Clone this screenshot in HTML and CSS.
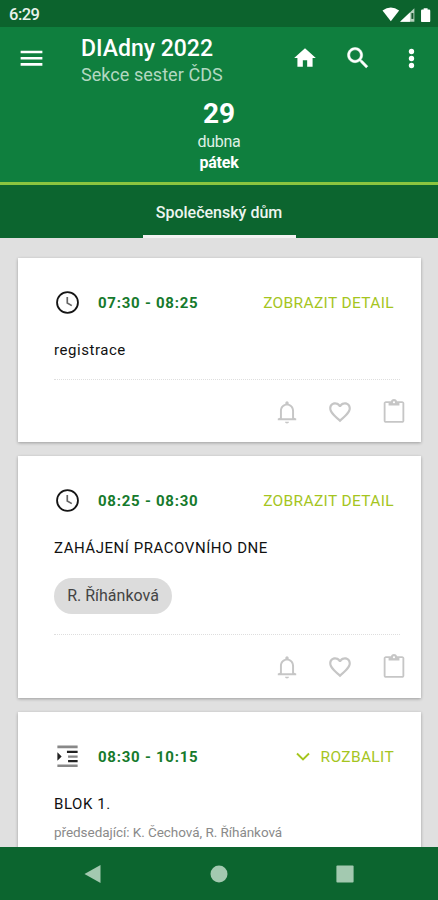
FILE: index.html
```html
<!DOCTYPE html>
<html lang="cs">
<head>
<meta charset="utf-8">
<meta name="viewport" content="width=device-width">
<title>DIAdny 2022</title>
<link rel="stylesheet" href="styles.css">
</head>
<body>
<svg width="0" height="0" class="defs">
  <symbol id="clock" viewBox="0 0 24 24"><circle cx="12" cy="12" r="9.300" fill="none" stroke="currentColor" stroke-width="1.600"/><path d="M11.800 7v5.400l4 2.400" fill="none" stroke="#666" stroke-width="1.500"/></symbol>
  <symbol id="bell" viewBox="0 0 24 24"><path fill="currentColor" fill-rule="evenodd" d="M12 22.500c1 0 1.800-.6 1.800-1.500h-3.600c0 .9.800 1.500 1.800 1.500zM18.500 17.300V11c0-3.200-2-5.900-5-6.600V3.500C13.500 2.700 12.800 2 12 2s-1.500.7-1.500 1.500v.9c-3 .7-5 3.400-5 6.600v6.300L3.500 18.100v1.400h17v-1.400zM16.700 17.700H7.300V11c0-2.700 2-5 4.700-5s4.700 2.300 4.700 5z"/></symbol>
  <symbol id="heart" viewBox="0 0 24 24"><path fill="currentColor" d="M16.500 3c-1.740 0-3.410.81-4.500 2.090C10.910 3.810 9.240 3 7.500 3 4.420 3 2 5.420 2 8.500c0 3.780 3.400 6.860 8.550 11.540L12 21.350l1.450-1.320C18.600 15.360 22 12.280 22 8.500 22 5.420 19.580 3 16.500 3zm-4.400 15.550l-.1.100-.1-.1C7.140 14.240 4 11.390 4 8.500 4 6.500 5.500 5 7.500 5c1.540 0 3.040.99 3.570 2.360h1.870C13.460 5.990 14.960 5 16.500 5c2 0 3.500 1.500 3.500 3.500 0 2.890-3.140 5.740-7.900 10.050z"/></symbol>
  <symbol id="clip" viewBox="0 0 24 24"><path fill="currentColor" fill-rule="evenodd" d="M19.500 2h-4.680C14.400.84 13.300 0 12 0S9.600.84 9.180 2H4.500c-1.100 0-2 .9-2 2v16c0 1.100.9 2 2 2h15c1.100 0 2-.9 2-2V4c0-1.100-.9-2-2-2zM12 2c.55 0 1 .45 1 1s-.45 1-1 1-1-.45-1-1 .45-1 1-1zm7.800 18.300H4.200V3.700H7V6h10V3.700h2.800z"/></symbol>
</svg>
<div class="screen">
  <div class="status">
    <span class="time">6:29</span>
    <svg class="signals" viewBox="0 0 52 16" fill="#fff">
      <path d="M.5 3.300Q9 -2.500 17.500 3.300L9 14.300z"/>
      <path d="M33 1v14H18.500z" fill="#b5d0bd"/><path d="M28.500 5.400V15H18.500z"/><path d="M30 6h2v6h-2z" fill="#14562c"/>
      <path d="M42.500 1h4v1.500H48q1.200 0 1.200 1.200V14q0 1.200-1.200 1.200h-7q-1.200 0-1.200-1.200V3.700q0-1.200 1.200-1.200h1.500z"/>
    </svg>
  </div>
  <header class="header">
    <div class="bar">
      <svg class="icon menu" viewBox="0 0 24 24"><path d="M3 18h18v-2.200H3zm0-5.100h18v-2.200H3zM3 5.500v2.200h18V5.500z"/></svg>
      <div class="titles">
        <h1>DIAdny 2022</h1>
        <p>Sekce sester ČDS</p>
      </div>
      <svg class="icon home" viewBox="0 0 24 24"><path d="M10 20v-6h4v6h5v-8h3L12 3 2 12h3v8z"/></svg>
      <svg class="icon search" viewBox="0 0 24 24"><path stroke="#fff" stroke-width=".4" d="M15.500 14h-.79l-.28-.27C15.410 12.590 16 11.110 16 9.500 16 5.910 13.090 3 9.500 3S3 5.910 3 9.500 5.910 16 9.500 16c1.610 0 3.090-.59 4.230-1.570l.27.28v.79l5 4.990L20.490 19l-4.990-5zm-6 0C7.010 14 5 11.990 5 9.500S7.010 5 9.500 5 14 7.010 14 9.500 11.990 14 9.500 14z"/></svg>
      <svg class="icon more" viewBox="0 0 24 24"><circle cx="12" cy="6.200" r="2.200"/><circle cx="12" cy="12" r="2.200"/><circle cx="12" cy="17.800" r="2.200"/></svg>
    </div>
    <div class="date">
      <div class="day">29</div>
      <div class="month">dubna</div>
      <div class="weekday">pátek</div>
    </div>
  </header>
  <nav class="tabs"><div class="tab"><span>Společenský dům</span></div></nav>
  <main class="list">
    <article class="card first">
      <div class="row"><svg class="lead"><use href="#clock"/></svg><span class="hours">07:30 - 08:25</span><span class="action">ZOBRAZIT DETAIL</span></div>
      <h2>registrace</h2>
      <hr>
      <div class="tools"><svg><use href="#bell"/></svg><svg><use href="#heart"/></svg><svg><use href="#clip"/></svg></div>
    </article>
    <article class="card">
      <div class="row"><svg class="lead"><use href="#clock"/></svg><span class="hours">08:25 - 08:30</span><span class="action">ZOBRAZIT DETAIL</span></div>
      <h2>ZAHÁJENÍ PRACOVNÍHO DNE</h2>
      <div class="chip"><span>R. Říhánková</span></div>
      <hr>
      <div class="tools"><svg><use href="#bell"/></svg><svg><use href="#heart"/></svg><svg><use href="#clip"/></svg></div>
    </article>
    <article class="card last">
      <div class="row">
        <svg class="lead" viewBox="0 0 24 24"><path fill="#888" d="M3 2.300h18v2.300H3zM3 19.100h18v2.300H3zM12.500 11h8.500v2h-8.500z"/><path fill="#222" d="M11.500 6.800h9.500v2h-9.500zM12.500 15.100h8.500v2h-8.500zM3 8.200l3.800 3.800L3 15.800z"/></svg>
        <span class="hours">08:30 - 10:15</span>
        <span class="action"><svg class="chev" viewBox="0 0 14 10"><path d="M1 1.500l6 6 6-6" fill="none" stroke="currentColor" stroke-width="1.900"/></svg><span>ROZBALIT</span></span>
      </div>
      <h2>BLOK 1.</h2>
      <p class="chair">předsedající: K. Čechová, R. Říhánková</p>
    </article>
  </main>
  <footer class="sysnav">
    <svg viewBox="0 0 18 20"><path d="M.5 10L16.500 1v18z"/></svg>
    <svg viewBox="0 0 18 20"><circle cx="9" cy="10" r="8.500"/></svg>
    <svg viewBox="0 0 18 20"><rect x=".4" y="1.400" width="17.200" height="17.200" rx="1"/></svg>
  </footer>
</div>
</body>
</html>
```
FILE: styles.css
```css
* { box-sizing: border-box; margin: 0; padding: 0; }
body { font-family: Roboto, sans-serif; background: #e0e0e0; overflow: hidden; }
.defs { display: none; }
svg { display: block; flex: none; }
.screen { width: 438px; height: 900px; display: flex; flex-direction: column; overflow: hidden; }
.status { flex: none; height: 27px; background: #0c632d; color: #e9f3ec; display: flex; align-items: center; justify-content: space-between; padding: 2px 5.500px 0 9px; }
.time { font-size: 16.500px; font-weight: 500; letter-spacing: -.5px; }
.signals { width: 51px; height: 16px; }
.header { flex: none; height: 158px; background: #0f7f3e; border-bottom: 3px solid #8bc540; color: #fff; }
.bar { height: 70px; display: flex; align-items: center; padding: 0 12px 8px 17px; }
.icon { width: 29px; height: 29px; fill: #fff; }
.titles { flex: 1; padding-left: 35px; padding-top: 7px; white-space: nowrap; }
h1 { font-size: 23px; line-height: 27px; font-weight: 500; }
.titles p { font-size: 18px; line-height: 26px; color: #b3d8c1; letter-spacing: .05px; }
.home { width: 26px; height: 26px; }
.search { margin-left: 26px; width: 28px; height: 28px; }
.more { margin-left: 25px; }
.date { text-align: center; }
.day { font-size: 28px; line-height: 33px; font-weight: 700; }
.month { font-size: 16px; line-height: 24px; color: #dff0e5; letter-spacing: -.3px; }
.weekday { font-size: 16px; line-height: 18px; font-weight: 700; letter-spacing: -.2px; }
.tabs { flex: none; height: 53px; background: #0c652f; display: flex; justify-content: center; }
.tab { width: 153px; border-bottom: 3px solid #f2f2f2; color: #edf5ef; font-size: 16px; font-weight: 500; line-height: 55px; text-align: center; white-space: nowrap; }
.list { flex: 1; min-height: 0; overflow: hidden; padding: 20px 17px 0 18px; display: flex; flex-direction: column; gap: 14px; }
.card { flex: none; height: 242px; background: #fff; box-shadow: 0 1px 3px rgba(0,0,0,.3); padding: 30px 14.500px 0 36px; }
.first { height: 184px; }
.row { height: 29px; display: flex; align-items: center; padding-right: 12.500px; }
.lead { width: 27px; height: 27px; color: #151515; }
.hours { margin-left: 17px; padding-top: 1px; font-size: 15px; font-weight: 700; letter-spacing: .75px; color: #167a2c; white-space: nowrap; }
.action { margin-left: auto; padding-top: 1px; display: flex; align-items: center; gap: 11px; color: #a5c51e; font-size: 15.500px; white-space: nowrap; letter-spacing: .35px; }
.chev { width: 14px; height: 10px; }
h2 { margin-top: 21px; font-size: 15px; font-weight: 400; line-height: 25px; color: #111; white-space: nowrap; letter-spacing: .55px; }
hr { border: 0; border-top: 1px dotted #dedede; margin: 16px 6.500px 18.500px 0; }
.tools { display: flex; justify-content: flex-end; gap: 27.500px; color: #c6c6c6; }
.tools svg { width: 26px; height: 26px; }
.chip { margin-top: 16.500px; margin-bottom: 20.500px; width: 118px; height: 36px; border-radius: 18px; background: #dcdcdc; color: #444; font-size: 16px; line-height: 36px; text-align: center; white-space: nowrap; }
.last { height: 200px; }
.chair { margin-top: 6px; font-size: 13.500px; line-height: 19px; color: #8a8a8a; white-space: nowrap; letter-spacing: -.05px; }
.sysnav { flex: none; height: 53px; background: #0c652f; display: flex; justify-content: center; align-items: center; gap: 108px; }
.sysnav svg { width: 18px; height: 20px; fill: #a3c9b0; }
```
